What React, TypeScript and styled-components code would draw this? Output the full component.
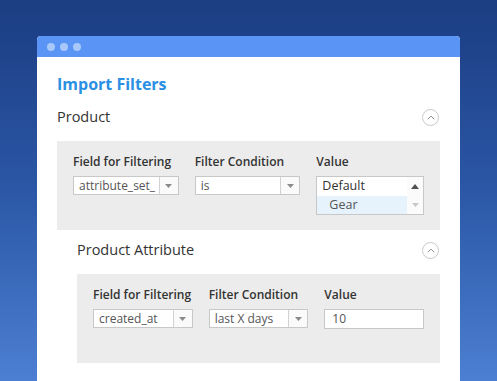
import styled, { createGlobalStyle } from "styled-components";

const GlobalStyle = createGlobalStyle`
  html, body {
    margin: 0;
    padding: 0;
    height: 100%;
    overflow: hidden;
  }
  body {
    font-family: "Open Sans", "Liberation Sans", sans-serif;
    background: linear-gradient(180deg, #1b3d82 0%, #2b57a6 50%, #4c7fd2 100%);
  }
`;

const Page = styled.div`
  width: 497px;
  height: 381px;
  padding: 36px 0 0 37px;
  box-sizing: border-box;
  overflow: hidden;
`;

const Window = styled.div`
  width: 423px;
  height: 400px;
  background: #ffffff;
  border-radius: 4px 4px 0 0;
  overflow: hidden;
`;

const TitleBar = styled.div`
  height: 21px;
  background: #5a95f5;
  display: flex;
  align-items: center;
  gap: 5px;
  padding-left: 10px;
`;

const Dot = styled.span`
  width: 8px;
  height: 8px;
  border-radius: 50%;
  background: #a8c7fb;
`;

const Body = styled.div`
  padding: 17px 20px 0 20px;
`;

const Heading = styled.h1`
  margin: 0;
  font-size: 16px;
  line-height: 20px;
  font-weight: 700;
  color: #2b8fe3;
`;

const SectionHeader = styled.div<{ $top: number }>`
  display: flex;
  align-items: center;
  justify-content: space-between;
  height: 24px;
  margin-top: ${({ $top }) => $top}px;
  margin-bottom: 12px;
`;

const SectionTitle = styled.div`
  font-size: 14.5px;
  line-height: 24px;
  font-weight: 500;
  color: #333333;
`;

const Toggle = styled.span`
  width: 15px;
  height: 15px;
  border: 1px solid #c9c9c9;
  border-radius: 50%;
  display: flex;
  align-items: center;
  justify-content: center;
  margin-right: 1px;
`;

const Nested = styled.div`
  margin-left: 20px;
`;

const Panel = styled.div`
  background: #ececec;
  height: 89px;
  box-sizing: border-box;
  padding: 12px 16px 0 16px;
  display: flex;
  gap: 16px;
`;

const Field = styled.div<{ $width: number }>`
  width: ${({ $width }) => $width}px;
  display: flex;
  flex-direction: column;
  gap: 5px;
`;

const Label = styled.div`
  font-size: 12px;
  line-height: 18px;
  font-weight: 600;
  color: #333333;
  white-space: nowrap;
`;

const Select = styled.div`
  height: 19px;
  box-sizing: border-box;
  border: 1px solid #c8c8c8;
  background: #ffffff;
  display: flex;
`;

const SelectText = styled.div`
  flex: 1;
  min-width: 0;
  padding-left: 5px;
  font-size: 12px;
  line-height: 17px;
  color: #555555;
  white-space: nowrap;
`;

const SelectArrow = styled.div`
  width: 18px;
  border-left: 1px solid #d2d2d2;
  background: #fafafa;
  display: flex;
  align-items: center;
  justify-content: center;
`;

const Input = styled.div`
  height: 20px;
  box-sizing: border-box;
  border: 1px solid #c8c8c8;
  background: #ffffff;
  padding-left: 7px;
  font-size: 12px;
  line-height: 18px;
  color: #555555;
`;

const ListBox = styled.div`
  height: 39px;
  box-sizing: border-box;
  border: 1px solid #c8c8c8;
  background: #ffffff;
  display: flex;
`;

const Options = styled.div`
  flex: 1;
  display: flex;
  flex-direction: column;
`;

const Option = styled.div<{ $group?: boolean; $selected?: boolean }>`
  height: 18.5px;
  font-size: 12.5px;
  line-height: 18px;
  padding-left: ${({ $group }) => ($group ? 5 : 12)}px;
  color: ${({ $group }) => ($group ? "#333333" : "#555555")};
  background: ${({ $selected }) => ($selected ? "#e6f2fc" : "transparent")};
`;

const ScrollBar = styled.div`
  width: 16px;
  background: #fbfbfb;
  display: flex;
  flex-direction: column;
  align-items: center;
  justify-content: space-between;
  padding: 7px 0 7px;
`;

const Caret = ({ color = "#8a8a8a" }: { color?: string }) => (
  <svg width="7" height="4" viewBox="0 0 7 4">
    <path d="M0 0h7L3.5 4z" fill={color} />
  </svg>
);

const CaretUp = ({ color }: { color: string }) => (
  <svg width="8" height="5" viewBox="0 0 8 5">
    <path d="M0 5h8L4 0z" fill={color} />
  </svg>
);

const Chevron = () => (
  <Toggle>
    <svg width="8" height="5" viewBox="0 0 8 5">
      <path d="M0.8 4.3L4 1.1l3.2 3.2" fill="none" stroke="#8a8a8a" strokeWidth="1" />
    </svg>
  </Toggle>
);

const App = () => {
  return (
    <>
      <GlobalStyle />
      <Page>
        <Window>
          <TitleBar>
            <Dot />
            <Dot />
            <Dot />
          </TitleBar>
          <Body>
            <Heading>Import Filters</Heading>
            <SectionHeader $top={11}>
              <SectionTitle>Product</SectionTitle>
              <Chevron />
            </SectionHeader>
            <Panel>
              <Field $width={106}>
                <Label>Field for Filtering</Label>
                <Select>
                  <SelectText>attribute_set_</SelectText>
                  <SelectArrow>
                    <Caret />
                  </SelectArrow>
                </Select>
              </Field>
              <Field $width={106}>
                <Label>Filter Condition</Label>
                <Select>
                  <SelectText>is</SelectText>
                  <SelectArrow>
                    <Caret />
                  </SelectArrow>
                </Select>
              </Field>
              <Field $width={108}>
                <Label>Value</Label>
                <ListBox>
                  <Options>
                    <Option $group>Default</Option>
                    <Option $selected>Gear</Option>
                  </Options>
                  <ScrollBar>
                    <CaretUp color="#505050" />
                    <Caret color="#c8c8c8" />
                  </ScrollBar>
                </ListBox>
              </Field>
            </Panel>
            <Nested>
              <SectionHeader $top={8}>
                <SectionTitle>Product Attribute</SectionTitle>
                <Chevron />
              </SectionHeader>
              <Panel>
                <Field $width={100}>
                  <Label>Field for Filtering</Label>
                  <Select>
                    <SelectText>created_at</SelectText>
                    <SelectArrow>
                      <Caret />
                    </SelectArrow>
                  </Select>
                </Field>
                <Field $width={100}>
                  <Label>Filter Condition</Label>
                  <Select>
                    <SelectText>last X days</SelectText>
                    <SelectArrow>
                      <Caret />
                    </SelectArrow>
                  </Select>
                </Field>
                <Field $width={100}>
                  <Label>Value</Label>
                  <Input>10</Input>
                </Field>
              </Panel>
            </Nested>
          </Body>
        </Window>
      </Page>
    </>
  );
};

export default App;
